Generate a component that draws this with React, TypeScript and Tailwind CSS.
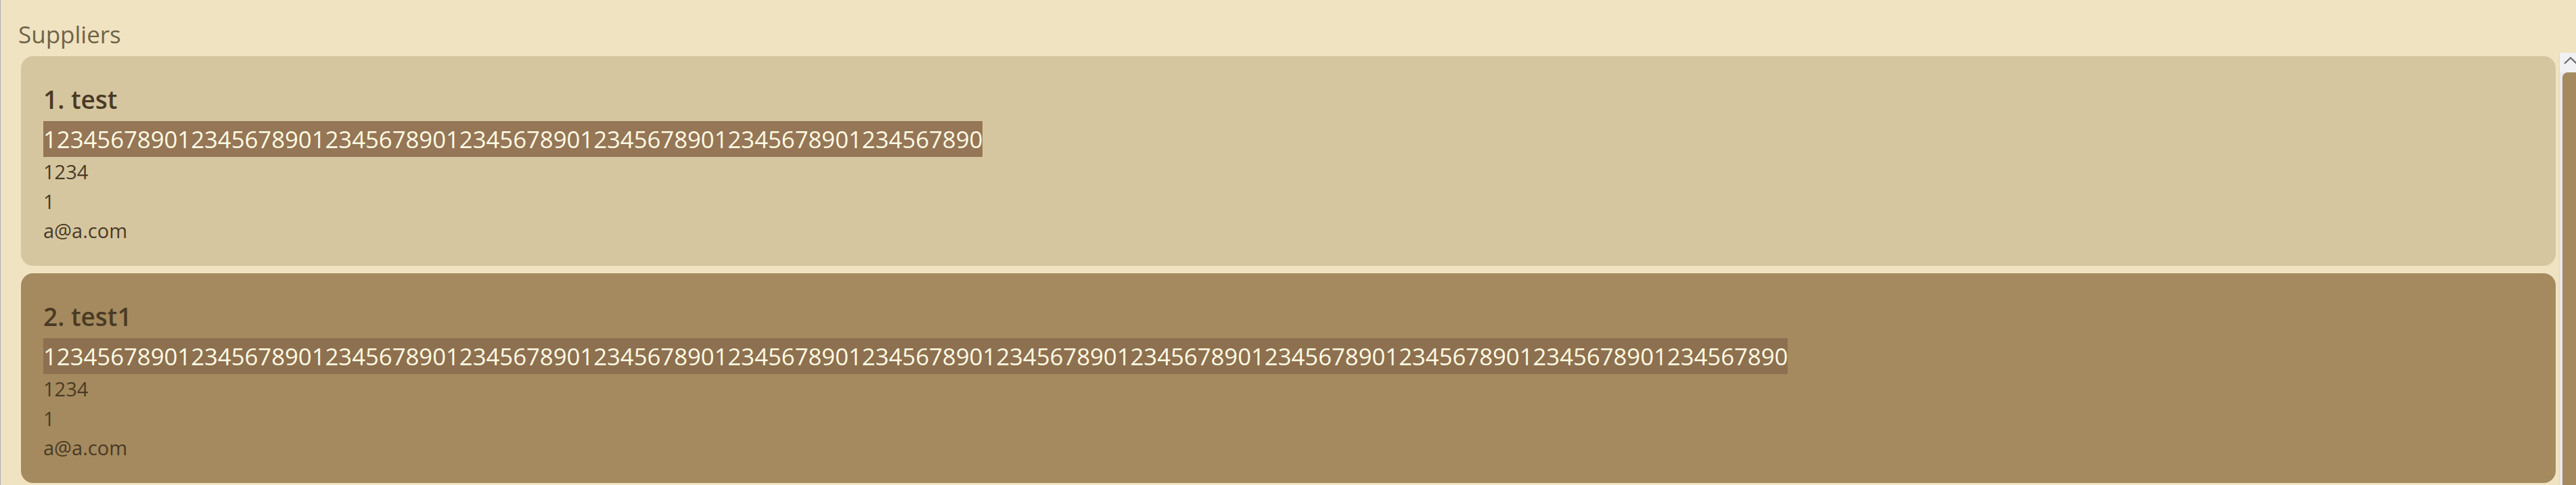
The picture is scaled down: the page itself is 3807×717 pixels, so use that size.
import React from 'react'

const digits = (n: number) => '1234567890'.repeat(n)

type Supplier = {
  name: string
  phone: string
  address: string
  tag: string
  email: string
}

const suppliers: Supplier[] = [
  { name: 'test', phone: digits(7), address: '1234', tag: '1', email: 'a@a.com' },
  { name: 'test1', phone: digits(13), address: '1234', tag: '1', email: 'a@a.com' },
]

function SupplierCard({ s, index, selected }: { s: Supplier; index: number; selected: boolean }) {
  return (
    <div
      className={`rounded-[18px] pl-[33px] pt-[39px] pb-[30px] h-[310px] shrink-0 ${
        selected ? 'bg-[#a48a5e]' : 'bg-[#d5c6a0]'
      }`}
    >
      {/* Name */}
      <div className="text-[37px] leading-[50px] font-semibold text-[#4a3a25] whitespace-nowrap">
        {index + 1}. {s.name}
      </div>

      {/* Phone (highlighted) */}
      <div
        className={`mt-[7px] w-fit text-[34.7px] leading-[53px] text-[#fffbe3] whitespace-nowrap ${
          selected ? 'bg-[#8d704f]' : 'bg-[#957656]'
        }`}
      >
        {s.phone}
      </div>

      {/* Details */}
      <div className="text-[29px] leading-[43.5px] font-normal text-[#4a3a25]">
        <div>{s.address}</div>
        <div>{s.tag}</div>
        <div>{s.email}</div>
      </div>
    </div>
  )
}

function ScrollBar() {
  return (
    <div className="w-[25px] shrink-0 bg-[#e9e9ec] border-l border-[#d8d8dc] overflow-hidden flex flex-col">
      <div className="h-[29px] shrink-0 bg-[#f1f1f3] pl-[6px] pt-[6px]">
        <svg width="22" height="12" viewBox="0 0 22 12">
          <polyline points="1,10 10,1.5 19,10" fill="none" stroke="#6f6f73" strokeWidth="2.4" />
        </svg>
      </div>
      <div className="ml-[4px] w-[30px] flex-1 bg-[#a48a5e] rounded-tl-[8px]" />
    </div>
  )
}

export default function App() {
  return (
    <div
      className="w-full h-[717px] overflow-hidden bg-[#f0e3c1] border-l border-[#a9b0bb] flex flex-col"
      style={{ fontFamily: '"Open Sans", "Noto Sans", sans-serif' }}
    >
      {/* Header */}
      <div className="pl-[26px] pt-[27px] text-[35px] leading-[48px] font-medium text-[#6f6348]">Suppliers</div>

      {/* List */}
      <div className="mt-[3px] flex flex-1 min-h-0">
        <div className="flex-1 min-w-0 pl-[30px] pr-[5px] pt-[5px] flex flex-col gap-[11px]">
          {suppliers.map((s, i) => (
            <SupplierCard key={i} s={s} index={i} selected={i === 1} />
          ))}
        </div>
        <ScrollBar />
      </div>
    </div>
  )
}
